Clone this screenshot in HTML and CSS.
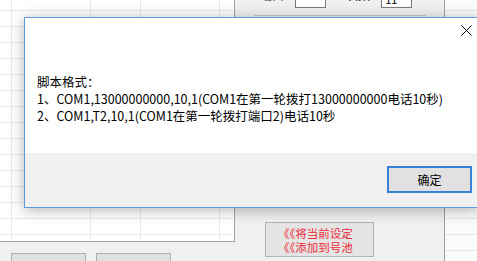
FILE: index.html
```html
<!DOCTYPE html>
<html lang="zh-CN">
<head>
    <meta charset="UTF-8">
    <title>脚本格式</title>
    <link rel="stylesheet" href="styles.css">
</head>
<body>

    <div class="app">
        <!-- left: number list + buttons -->
        <div class="left">
            <div class="sheet"></div>
            <div class="left-buttons">
                <button class="win-btn"></button>
                <button class="win-btn"></button>
            </div>
        </div>

        <!-- middle: settings panel -->
        <div class="mid">
            <div class="group">
                <span class="lbl">端口:</span>
                <span class="field"></span>
                <span class="lbl">次数:</span>
                <span class="field">11</span>
            </div>
            <button class="add-btn">《《将当前设定<br>《《添加到号池</button>
        </div>

        <!-- right: pool list -->
        <div class="right"></div>
    </div>

    <!-- message box -->
    <div class="dialog">
        <div class="titlebar">
            <svg class="close" width="11" height="11" viewBox="0 0 11 11">
                <path d="M0.5 0.5 L10.5 10.5 M10.5 0.5 L0.5 10.5" stroke="#000" stroke-width="1" fill="none"/>
            </svg>
        </div>
        <div class="message">
            <p>脚本格式：</p>
            <p>1、COM1,13000000000,10,1(COM1在第一轮拨打13000000000电话10秒)</p>
            <p>2、COM1,T2,10,1(COM1在第一轮拨打端口2)电话10秒</p>
        </div>
        <div class="footer">
            <button class="ok-btn">确定</button>
        </div>
    </div>

</body>
</html>
```

FILE: styles.css
```css
body {
    margin: 0;
    width: 477px;
    height: 261px;
    overflow: hidden;
    background-color: #f0f0f0;
    font-family: "Noto Sans CJK SC", "Noto Sans", sans-serif;
    position: relative;
}

.app {
    display: flex;
    height: 261px;
}

/* Left list */
.left {
    width: 235px;
    flex-shrink: 0;
}

.sheet {
    height: 242px;
    box-sizing: border-box;
    background-color: #fff;
    border-right: 1px solid #a3a3ab;
    border-bottom: 1px solid #a3a3ab;
    background-image:
        linear-gradient(to right, transparent 11px, #e9e9e9 11px, #e9e9e9 12px, transparent 12px),
        linear-gradient(to right, transparent 90px, #e9e9e9 90px, #e9e9e9 91px, transparent 91px),
        linear-gradient(to right, transparent 140px, #e9e9e9 140px, #e9e9e9 141px, transparent 141px),
        linear-gradient(to right, transparent 219px, #e9e9e9 219px, #e9e9e9 220px, transparent 220px),
        repeating-linear-gradient(to bottom, transparent 0, transparent 10px, #e9e9e9 10px, #e9e9e9 11px, transparent 11px, transparent 16px);
}

.left-buttons {
    display: flex;
    gap: 10px;
    padding: 11px 0 0 11px;
}

.win-btn {
    width: 75px;
    height: 20px;
    margin: 0;
    background-color: #e1e1e1;
    border: 1px solid #adadad;
}

/* Middle panel */
.mid {
    width: 209px;
    flex-shrink: 0;
    display: flex;
    flex-direction: column;
    align-items: flex-start;
}

.group {
    margin: -14px 0 0 19px;
    width: 172px;
    height: 30px;
    box-sizing: border-box;
    border-bottom: 1px solid #c9c9c9;
    display: flex;
    align-items: flex-start;
    padding-top: 4px;
    font-size: 12px;
}

.lbl {
    width: 38px;
    padding-left: 6px;
    margin-top: -3px;
    line-height: 16px;
    color: #222;
}

.field {
    width: 28px;
    height: 16px;
    margin-right: 14px;
    background-color: #fff;
    border: 1px solid #7a7a7a;
    font-size: 11px;
    line-height: 16px;
    padding-left: 3px;
}

.add-btn {
    margin: 206px 0 0 30px;
    width: 109px;
    height: 35px;
    padding: 0 0 0 12px;
    background-color: #e5e5e5;
    border: 1px solid #b3b3b3;
    color: #ec2b36;
    font-family: inherit;
    font-size: 11.5px;
    line-height: 14px;
    text-align: left;
}

/* Right list */
.right {
    flex: 1;
    border-left: 1px solid #a0a0a0;
    background-color: #fbfbfb;
    background-image: repeating-linear-gradient(to bottom, transparent 0, transparent 10px, #e6e6e6 10px, #e6e6e6 11px, transparent 11px, transparent 16px);
}

/* Message box */
.dialog {
    position: absolute;
    left: 24px;
    top: 17px;
    width: 455px;
    height: 189px;
    background-color: #fff;
    border: 1px solid #5e98df;
    box-shadow: 0 2px 14px rgba(0, 0, 0, 0.3);
    display: flex;
    flex-direction: column;
}

.titlebar {
    height: 30px;
    box-sizing: border-box;
    display: flex;
    justify-content: flex-end;
    align-items: flex-start;
    padding: 7px 8px 0 0;
}

.message {
    flex: 1;
    padding: 25px 0 0 12px;
    font-size: 12.5px;
    line-height: 17px;
    color: #000;
}

.message p {
    margin: 0;
    white-space: nowrap;
}

.footer {
    height: 54px;
    background-color: #f0f0f0;
    display: flex;
    justify-content: flex-end;
    align-items: flex-start;
    padding: 13px 8px 0 0;
    box-sizing: border-box;
}

.ok-btn {
    width: 85px;
    height: 27px;
    margin: 0;
    box-sizing: border-box;
    background-color: #e1e1e1;
    border: 2px solid #3b7fdb;
    font-family: inherit;
    font-size: 12px;
    color: #000;
}
```
